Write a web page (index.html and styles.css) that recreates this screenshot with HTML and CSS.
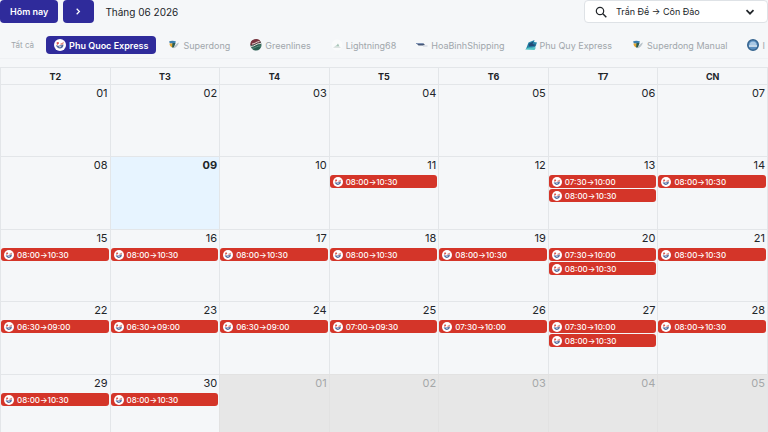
FILE: index.html
```html
<!DOCTYPE html>
<html lang="vi">
<head>
  <meta charset="UTF-8">
  <meta name="viewport" content="width=device-width, initial-scale=1.0">
  <title>Lịch tàu</title>
  <link rel="stylesheet" href="styles.css">
</head>
<body>
  <!-- Logo dùng chung -->
  <svg class="sprite" aria-hidden="true">
    <symbol id="logo-pq" viewBox="0 0 24 24">
      <circle cx="12" cy="12" r="12" fill="#fff"/>
      <path d="M5 7c3-2 5-1 5 2l-4 3z" fill="#d8544e"/>
      <path d="M13 9l7-3-2 5-5 1z" fill="#e08a80"/>
      <path d="M4 12c2 1 4 2 7 1l8-2c0 5-3 8-7 8-4 0-7-3-8-7z" fill="#526a9c"/>
      <path d="M9 15l7-2-4 4z" fill="#d5dced"/>
    </symbol>
    <symbol id="logo-sd" viewBox="0 0 24 24">
      <path d="M2 5c4-2 9-2 14 0l-2 4H4z" fill="#3b7fae"/>
      <path d="M3 9h7l-1 8c-4-1-6-4-6-8z" fill="#e5a52d"/>
      <path d="M9 8h6l-3 9H8z" fill="#2c5c50"/>
      <path d="M12 17c2-5 5-8 10-10-2 6-5 10-11 12z" fill="#b9c3cb"/>
    </symbol>
  </svg>

  <!-- Thanh công cụ -->
  <header class="toolbar">
    <button type="button" class="btn">Hôm nay</button>
    <button type="button" class="btn btn-next" aria-label="Tháng sau">
      <svg viewBox="0 0 12 12"><path d="M4 3l3 3-3 3" fill="none" stroke="currentColor" stroke-width="1.3"/></svg>
    </button>
    <h1 class="title">Tháng 06 2026</h1>
    <div class="route">
      <svg class="route-search" viewBox="0 0 12 12"><circle cx="5" cy="5" r="3.7" fill="none" stroke="currentColor" stroke-width="1.2"/><path d="M7.8 7.8L11.3 11.3" stroke="currentColor" stroke-width="1.4"/></svg>
      <select class="route-select" aria-label="Tuyến">
        <option>Trần Đề → Côn Đảo</option>
      </select>
      <svg class="route-arrow" viewBox="0 0 12 12"><path d="M2.5 4.2L6 7.7l3.500-3.500" fill="none" stroke="currentColor" stroke-width="1.7"/></svg>
    </div>
  </header>

  <!-- Lọc theo hãng tàu -->
  <nav class="filters" aria-label="Hãng tàu">
    <button type="button" class="chip chip-all">Tất cả</button>
    <button type="button" class="chip active"><svg class="logo"><use href="#logo-pq"/></svg>Phu Quoc Express</button>
    <button type="button" class="chip"><svg class="logo"><use href="#logo-sd"/></svg>Superdong</button>
    <button type="button" class="chip">
      <svg class="logo" viewBox="0 0 24 24"><circle cx="12" cy="12" r="11" fill="#285e50"/><path d="M1 13A11 11 0 0 1 22 7C15 6 10 12 1 13z" fill="#7a3540"/><path d="M2 15c8 0 11-7 20-6M4 10c6 0 9-5 15-5" fill="none" stroke="#e4d5d5" stroke-width="2"/><path d="M4 19c7-1 10-6 19-5" fill="none" stroke="#8fb9a8"/></svg>Greenlines</button>
    <button type="button" class="chip">
      <svg class="logo" viewBox="0 0 24 24"><circle cx="12" cy="12" r="11" fill="#fafbfb"/><path d="M6 15l5-2 3-4 3 6z" fill="#a9c5b8"/><path d="M5 17h14" stroke="#c3cccb"/></svg>Lightning68</button>
    <button type="button" class="chip">
      <svg class="logo" viewBox="0 0 24 24"><path d="M0 8h14l4 4-4 1H5z" fill="#465878"/><path d="M0 9h14" stroke="#7f93b5" stroke-width="2"/><path d="M14 14h9" stroke="#c9cfdb" stroke-width="2"/></svg>HoaBinhShipping</button>
    <button type="button" class="chip">
      <svg class="logo" viewBox="0 0 24 24"><path d="M2 20L7 7l12-5-1 4 6 1-4 10z" fill="#2585a8"/><path d="M7 10l10-5-2 5 8 2-6 2-9 1z" fill="#234b78"/><path d="M0 21c7-6 14-3 22-4l-3 5z" fill="#52c5c5"/></svg>Phu Quy Express</button>
    <button type="button" class="chip"><svg class="logo"><use href="#logo-sd"/></svg>Superdong Manual</button>
    <button type="button" class="chip">
      <svg class="logo" viewBox="0 0 24 24"><circle cx="12" cy="12" r="10.500" fill="#5b8fc0" stroke="#35648f" stroke-width="3"/><path d="M5 12a7 7 0 0 1 14 0z" fill="#a9c8e4"/><path d="M4 14h16" stroke="#e6eff7" stroke-width="3"/></svg>I</button>
  </nav>

  <!-- Lịch tháng -->
  <table class="calendar">
    <thead>
      <tr><th>T2</th><th>T3</th><th>T4</th><th>T5</th><th>T6</th><th>T7</th><th>CN</th></tr>
    </thead>
    <tbody>
      <tr>
        <td><span class="day">01</span></td>
        <td><span class="day">02</span></td>
        <td><span class="day">03</span></td>
        <td><span class="day">04</span></td>
        <td><span class="day">05</span></td>
        <td><span class="day">06</span></td>
        <td><span class="day">07</span></td>
      </tr>
      <tr>
        <td><span class="day">08</span></td>
        <td class="today"><span class="day">09</span></td>
        <td><span class="day">10</span></td>
        <td><span class="day">11</span>
          <a href="#" class="trip"><svg class="trip-logo"><use href="#logo-pq"/></svg>08:00→10:30</a></td>
        <td><span class="day">12</span></td>
        <td><span class="day">13</span>
          <a href="#" class="trip"><svg class="trip-logo"><use href="#logo-pq"/></svg>07:30→10:00</a>
          <a href="#" class="trip"><svg class="trip-logo"><use href="#logo-pq"/></svg>08:00→10:30</a></td>
        <td><span class="day">14</span>
          <a href="#" class="trip"><svg class="trip-logo"><use href="#logo-pq"/></svg>08:00→10:30</a></td>
      </tr>
      <tr>
        <td><span class="day">15</span>
          <a href="#" class="trip"><svg class="trip-logo"><use href="#logo-pq"/></svg>08:00→10:30</a></td>
        <td><span class="day">16</span>
          <a href="#" class="trip"><svg class="trip-logo"><use href="#logo-pq"/></svg>08:00→10:30</a></td>
        <td><span class="day">17</span>
          <a href="#" class="trip"><svg class="trip-logo"><use href="#logo-pq"/></svg>08:00→10:30</a></td>
        <td><span class="day">18</span>
          <a href="#" class="trip"><svg class="trip-logo"><use href="#logo-pq"/></svg>08:00→10:30</a></td>
        <td><span class="day">19</span>
          <a href="#" class="trip"><svg class="trip-logo"><use href="#logo-pq"/></svg>08:00→10:30</a></td>
        <td><span class="day">20</span>
          <a href="#" class="trip"><svg class="trip-logo"><use href="#logo-pq"/></svg>07:30→10:00</a>
          <a href="#" class="trip"><svg class="trip-logo"><use href="#logo-pq"/></svg>08:00→10:30</a></td>
        <td><span class="day">21</span>
          <a href="#" class="trip"><svg class="trip-logo"><use href="#logo-pq"/></svg>08:00→10:30</a></td>
      </tr>
      <tr>
        <td><span class="day">22</span>
          <a href="#" class="trip"><svg class="trip-logo"><use href="#logo-pq"/></svg>06:30→09:00</a></td>
        <td><span class="day">23</span>
          <a href="#" class="trip"><svg class="trip-logo"><use href="#logo-pq"/></svg>06:30→09:00</a></td>
        <td><span class="day">24</span>
          <a href="#" class="trip"><svg class="trip-logo"><use href="#logo-pq"/></svg>06:30→09:00</a></td>
        <td><span class="day">25</span>
          <a href="#" class="trip"><svg class="trip-logo"><use href="#logo-pq"/></svg>07:00→09:30</a></td>
        <td><span class="day">26</span>
          <a href="#" class="trip"><svg class="trip-logo"><use href="#logo-pq"/></svg>07:30→10:00</a></td>
        <td><span class="day">27</span>
          <a href="#" class="trip"><svg class="trip-logo"><use href="#logo-pq"/></svg>07:30→10:00</a>
          <a href="#" class="trip"><svg class="trip-logo"><use href="#logo-pq"/></svg>08:00→10:30</a></td>
        <td><span class="day">28</span>
          <a href="#" class="trip"><svg class="trip-logo"><use href="#logo-pq"/></svg>08:00→10:30</a></td>
      </tr>
      <tr>
        <td><span class="day">29</span>
          <a href="#" class="trip"><svg class="trip-logo"><use href="#logo-pq"/></svg>08:00→10:30</a></td>
        <td><span class="day">30</span>
          <a href="#" class="trip"><svg class="trip-logo"><use href="#logo-pq"/></svg>08:00→10:30</a></td>
        <td class="other"><span class="day">01</span></td>
        <td class="other"><span class="day">02</span></td>
        <td class="other"><span class="day">03</span></td>
        <td class="other"><span class="day">04</span></td>
        <td class="other"><span class="day">05</span></td>
      </tr>
    </tbody>
  </table>
</body>
</html>
```
FILE: styles.css
```css
* {
  box-sizing: border-box;
}
body {
  margin: 0;
  font-family: Inter, "Liberation Sans", sans-serif;
  font-size: 11px;
  color: #212529;
  background-color: #f5f7f9;
}
html {
  overflow: hidden;
}
button, select {
  font-family: inherit;
}
.sprite {
  display: none;
}

/* Thanh công cụ */
.toolbar {
  display: flex;
  align-items: center;
  height: 23px;
}
.btn {
  height: 23px;
  padding: 0 10px;
  margin-right: 5px;
  border: none;
  border-radius: 4px;
  background-color: #2f2b9b;
  color: #fff;
  font-size: 9px;
  font-weight: 600;
  cursor: pointer;
}
.btn-next {
  margin-right: 11px;
}
.btn svg {
  display: block;
  width: 11px;
  height: 11px;
}
.title {
  margin: 0;
  font-size: 10px;
  font-weight: 400;
}
.route {
  display: flex;
  position: relative;
  width: 184px;
  margin-left: auto;
}
.route-select {
  appearance: none;
  width: 100%;
  height: 23px;
  padding: 0 28px 0 31px;
  border: 1px solid #dee2e6;
  border-radius: 4px;
  background-color: #fff;
  color: #212529;
  font-size: 9px;
}
.route svg {
  position: absolute;
  top: 6px;
  width: 12px;
  height: 12px;
  pointer-events: none;
}
.route-search {
  left: 11px;
}
.route-arrow {
  right: 12px;
}

/* Hãng tàu */
.filters {
  display: flex;
  gap: 4px;
  margin-top: 13px;
  padding: 0 0 4px 3px;
  border-bottom: 1px solid #eff1f4;
  overflow: hidden;
}
.chip {
  display: flex;
  flex-shrink: 0;
  align-items: center;
  gap: 3px;
  height: 18px;
  padding: 0 8px;
  border: none;
  border-radius: 4px;
  background: none;
  color: #a0a6ab;
  font-size: 9px;
  cursor: pointer;
}
.chip-all {
  font-size: 8px;
}
.chip.active {
  background-color: #2f2b9b;
  color: #fff;
  font-weight: 600;
}
.logo {
  width: 12px;
  height: 12px;
}

/* Lịch */
.calendar {
  width: 100%;
  margin-top: 8px;
  table-layout: fixed;
  border-collapse: separate;
  border-spacing: 0;
  border-right: 1px solid #e3e6e9;
}
th, td {
  padding: 0;
  border-top: 1px solid #e3e6e9;
  border-left: 1px solid #e3e6e9;
}
th {
  height: 17px;
  font-size: 9px;
  font-weight: 700;
}
td {
  height: 72px;
  vertical-align: top;
}
tr:nth-child(even) td {
  height: 73px;
}
.day {
  display: block;
  padding: 1px 2px 2px 0;
  line-height: 15px;
  text-align: right;
}
.today {
  background-color: #e7f4ff;
}
.today .day {
  font-weight: 700;
}
.other {
  background-color: #e7e7e7;
  border-color: #e2e2e2;
}
.other .day {
  color: #a5a7a9;
}
.trip {
  display: flex;
  align-items: center;
  gap: 3px;
  height: 13px;
  margin: 0 1px 1px 0;
  padding-left: 3px;
  border-radius: 3px;
  background-color: #d43529;
  color: #fff;
  font-size: 8px;
  font-weight: 500;
  text-decoration: none;
}
.trip-logo {
  width: 10px;
  height: 10px;
}
```
